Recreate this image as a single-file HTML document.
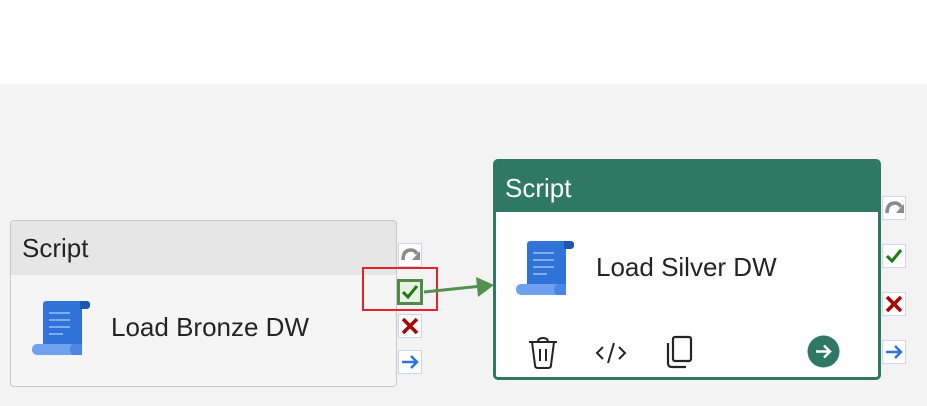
<!DOCTYPE html>
<html><head><style>
body{margin:0;width:927px;height:406px;overflow:hidden;background:#f3f3f3;font-family:"Segoe UI","Liberation Sans",sans-serif;position:relative}
.top{position:absolute;left:0;top:0;width:927px;height:84px;background:#fff}
.card{position:absolute;box-sizing:border-box}
.t{position:absolute;font-size:26px;color:#242424;white-space:nowrap}
.si{position:absolute;width:24px;height:24px;background:#fff;border:1px solid #c7d7ee;box-sizing:border-box}
</style></head><body>
<div class="top"></div>
<div class="card" style="left:10px;top:220px;width:387px;height:167px;border:1.5px solid #c8c8c8;border-radius:4px;background:#f5f5f5;overflow:hidden">
 <div style="height:54px;background:#e6e6e6"></div>
</div>
<div class="t" style="left:22px;top:233px">Script</div>
<svg style="position:absolute;left:31px;top:300px" width="60" height="56" viewBox="0 0 60 56"><path d="M12 4 Q12 1 16 1 H56 Q59 1 59 5 Q59 9 55 9 H51 V50 H12 Z" fill="#2f73d8"/><path d="M49 1 H55 Q59 1 59 5 Q59 9 55 9 H49Z" fill="#1d56b0"/><rect x="1" y="44" width="48" height="11" rx="5" fill="#6fa1ee"/><path d="M44 44 H51 V55 H44 Q39 55 39 50 Q39 44 44 44Z" fill="#4a86e2"/><g stroke="#9cc0f5" stroke-width="1.5"><line x1="18" y1="13" x2="39" y2="13"/><line x1="18" y1="20" x2="39" y2="20"/><line x1="18" y1="27" x2="39" y2="27"/><line x1="18" y1="34" x2="32" y2="34"/></g></svg>
<div class="t" style="left:111px;top:312px">Load Bronze DW</div>
<div class="si" style="left:398px;top:243px"><svg width="22" height="22" viewBox="0 0 22 22"><path d="M4 16 Q4 6 12 6 Q16 6 18 10" stroke="#8a8a8a" stroke-width="3.5" fill="none"/><path d="M21 7 V16 H13Z" fill="#8a8a8a"/></svg></div>
<div style="position:absolute;left:397px;top:279px;width:26px;height:26px;border:3px solid #4f8a48;box-sizing:border-box;background:#e6f1e4"><svg width="20" height="20" viewBox="0 0 20 20"><path d="M3 10 L8 15 L17 4" stroke="#1e7a10" stroke-width="3" fill="none"/></svg></div>
<div class="si" style="left:398px;top:314px"><svg width="22" height="22" viewBox="0 0 22 22"><path d="M4 4 L18 18 M18 4 L4 18" stroke="#a80000" stroke-width="3.5"/></svg></div>
<div class="si" style="left:398px;top:350px"><svg width="22" height="22" viewBox="0 0 22 22"><path d="M3 11 H18 M12 5 L18 11 L12 17" stroke="#2f73d8" stroke-width="2.5" fill="none"/></svg></div>
<div style="position:absolute;left:362px;top:267px;width:76px;height:44px;border:2px solid #e8202a;box-sizing:border-box"></div>
<svg style="position:absolute;left:420px;top:275px" width="80" height="25"><path d="M4 17 L62 11" stroke="#539150" stroke-width="3"/><path d="M56 2 L74 10 L58 22Z" fill="#539150"/></svg>
<div class="card" style="left:493px;top:159px;width:388px;height:221px;border:3px solid #2e7864;border-radius:5px;background:#fff;overflow:hidden">
 <div style="height:53px;background:#2e7864;margin:-3px"></div>
</div>
<div class="t" style="left:505px;top:173px;color:#fff">Script</div>
<svg style="position:absolute;left:515px;top:240px" width="60" height="56" viewBox="0 0 60 56"><path d="M12 4 Q12 1 16 1 H56 Q59 1 59 5 Q59 9 55 9 H51 V50 H12 Z" fill="#2f73d8"/><path d="M49 1 H55 Q59 1 59 5 Q59 9 55 9 H49Z" fill="#1d56b0"/><rect x="1" y="44" width="48" height="11" rx="5" fill="#6fa1ee"/><path d="M44 44 H51 V55 H44 Q39 55 39 50 Q39 44 44 44Z" fill="#4a86e2"/><g stroke="#9cc0f5" stroke-width="1.5"><line x1="18" y1="13" x2="39" y2="13"/><line x1="18" y1="20" x2="39" y2="20"/><line x1="18" y1="27" x2="39" y2="27"/><line x1="18" y1="34" x2="32" y2="34"/></g></svg>
<div class="t" style="left:596px;top:252px">Load Silver DW</div>
<svg style="position:absolute;left:527px;top:337px" width="32" height="32" viewBox="0 0 32 32" fill="none" stroke="#242424" stroke-width="2"><path d="M2 5 H30 M11 5 Q11 1 16 1 Q21 1 21 5 M5 5 L8 28 Q8 31 11 31 H21 Q24 31 24 28 L27 5 M13 12 V24 M19 12 V24"/></svg>
<svg style="position:absolute;left:595px;top:340px" width="32" height="26" viewBox="0 0 32 26" fill="none" stroke="#242424" stroke-width="2"><path d="M8 7 L2 13 L8 19 M24 7 L30 13 L24 19 M19 3 L13 23"/></svg>
<svg style="position:absolute;left:664px;top:335px" width="30" height="34" viewBox="0 0 30 34" fill="none" stroke="#242424" stroke-width="2.2"><rect x="9" y="2" width="18" height="24" rx="2"/><path d="M4 8 V28 Q4 32 8 32 H22"/></svg>
<svg style="position:absolute;left:807px;top:335px" width="33" height="33" viewBox="0 0 33 33"><circle cx="16.5" cy="16.5" r="16" fill="#2e7864"/><path d="M9 16.5 H23 M17 10.5 L23 16.5 L17 22.5" stroke="#fff" stroke-width="2.5" fill="none"/></svg>
<div class="si" style="left:882px;top:196px"><svg width="22" height="22" viewBox="0 0 22 22"><path d="M4 16 Q4 6 12 6 Q16 6 18 10" stroke="#8a8a8a" stroke-width="3.5" fill="none"/><path d="M21 7 V16 H13Z" fill="#8a8a8a"/></svg></div>
<div class="si" style="left:882px;top:244px"><svg width="22" height="22" viewBox="0 0 22 22"><path d="M4 11 L9 16 L18 5" stroke="#1e7a10" stroke-width="3" fill="none"/></svg></div>
<div class="si" style="left:882px;top:292px"><svg width="22" height="22" viewBox="0 0 22 22"><path d="M4 4 L18 18 M18 4 L4 18" stroke="#a80000" stroke-width="3.5"/></svg></div>
<div class="si" style="left:882px;top:340px"><svg width="22" height="22" viewBox="0 0 22 22"><path d="M3 11 H18 M12 5 L18 11 L12 17" stroke="#2f73d8" stroke-width="2.5" fill="none"/></svg></div>
</body></html>
